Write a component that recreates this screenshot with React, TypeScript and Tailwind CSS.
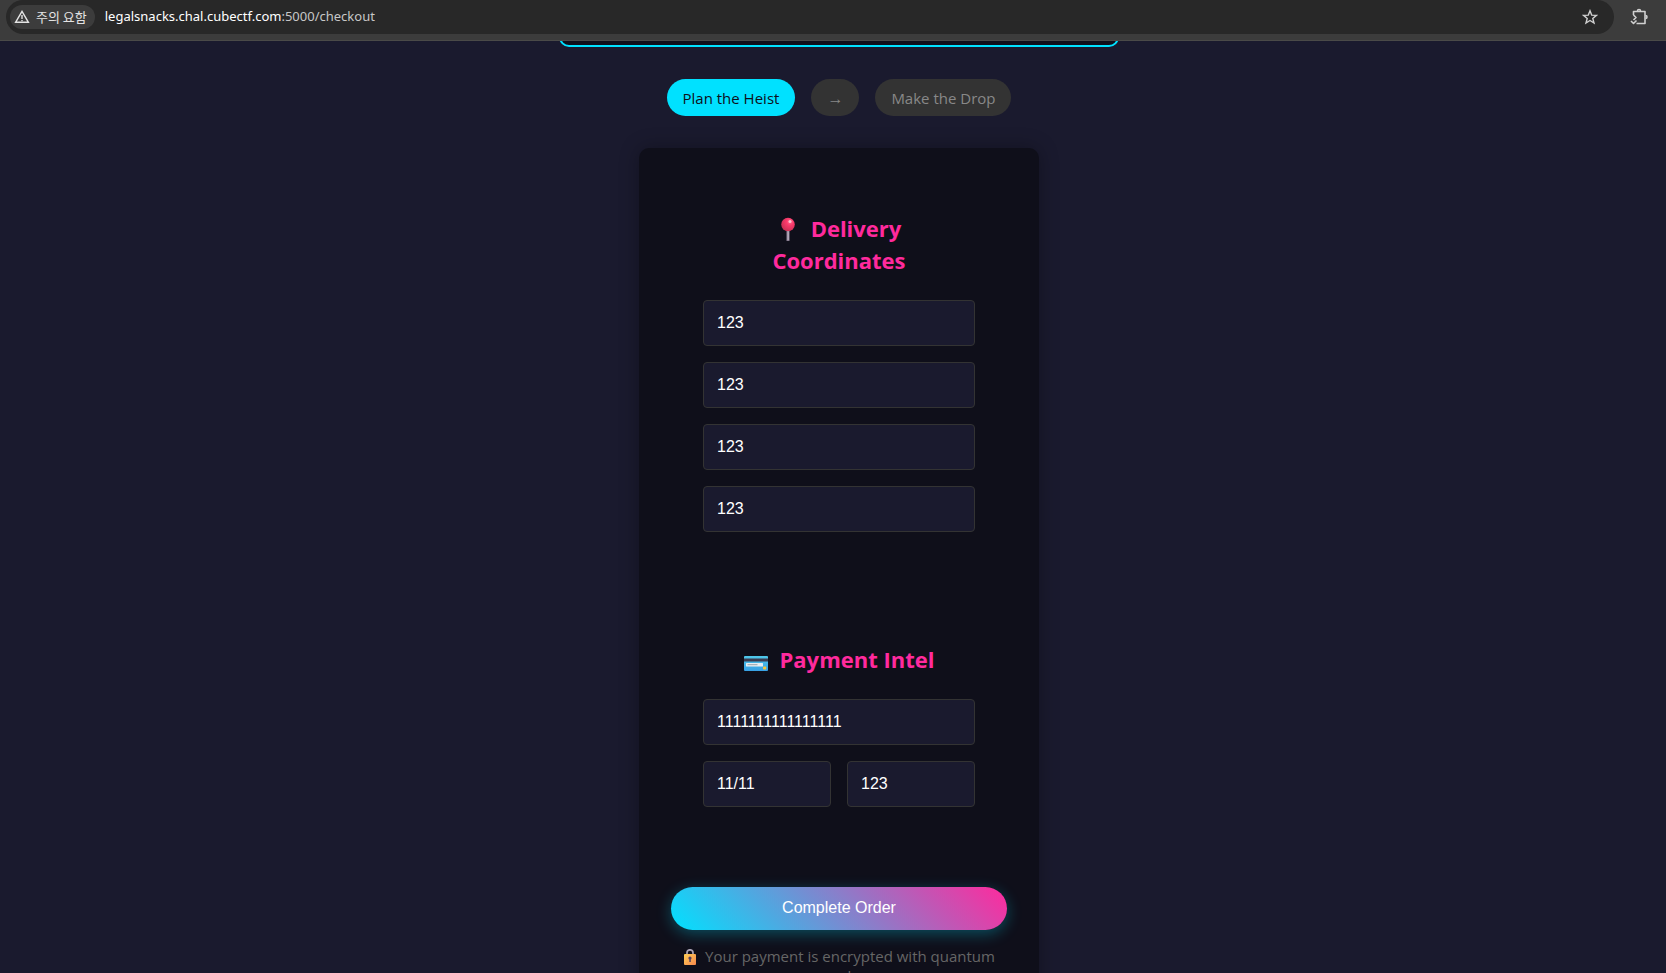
import React, { useState } from 'react';

const inputClass =
  "w-full min-w-0 h-[46px] px-[13px] bg-[#1a1a2e] border border-[#333] rounded text-base text-white outline-none focus:border-[#00e1ff] font-['Liberation_Sans',Arial,sans-serif]";

const headingClass = 'mb-6 text-center text-[22px] leading-8 font-bold text-[#ff2a9d]';

const PinIcon = () => (
  <svg viewBox="0 0 24 24" className="inline-block w-6 h-6 mr-2.5 align-[-4px]" aria-hidden="true">
    <defs>
      <radialGradient id="pin" cx="0.65" cy="0.3" r="0.75">
        <stop offset="0" stopColor="#ff6d8c" />
        <stop offset="0.35" stopColor="#fa3a6c" />
        <stop offset="1" stopColor="#c62f52" />
      </radialGradient>
    </defs>
    <rect x="9.5" y="12" width="3" height="12" rx="0.5" fill="#8b7f92" />
    <rect x="10.6" y="13" width="1" height="10" fill="#c9bfd0" />
    <circle cx="11" cy="7.5" r="6.8" fill="url(#pin)" />
    <circle cx="13" cy="4.5" r="1.5" fill="#ffc4d2" />
  </svg>
);

const CardIcon = () => (
  <svg viewBox="0 0 24 24" className="inline-block w-6 h-6 mr-3 align-[-7px]" aria-hidden="true">
    <defs>
      <linearGradient id="card" x1="0" y1="0" x2="0" y2="1">
        <stop offset="0" stopColor="#4fc8ea" />
        <stop offset="1" stopColor="#38a0e4" />
      </linearGradient>
    </defs>
    <rect x="0" y="5" width="24" height="15" rx="1" fill="url(#card)" />
    <rect x="0" y="7.5" width="24" height="3" fill="#3b3b4f" />
    <rect x="2" y="12" width="17" height="3.5" rx="0.5" fill="#e6edf2" />
    <rect x="3.5" y="13" width="10" height="1.2" fill="#aab0b6" />
    <rect x="19" y="15.5" width="3.2" height="3" rx="0.8" fill="#f8c63a" />
  </svg>
);

const LockIcon = () => (
  <svg viewBox="0 0 14 16" className="inline-block w-3.5 h-4 mr-2 align-[-3px]" aria-hidden="true">
    <defs>
      <linearGradient id="lock" x1="0" y1="0" x2="1" y2="1">
        <stop offset="0" stopColor="#ffcf55" />
        <stop offset="1" stopColor="#f7874d" />
      </linearGradient>
    </defs>
    <path d="M4 6V3.8a3 3 0 0 1 6 0V6" fill="none" stroke="#a9a2b4" strokeWidth="1.7" />
    <rect x="1" y="5" width="12" height="11" rx="1" fill="url(#lock)" />
    <circle cx="7" cy="9" r="1.6" fill="#54405f" />
    <rect x="6.3" y="9" width="1.5" height="4" fill="#54405f" />
  </svg>
);

const BrowserBar = () => (
  <div className="flex items-start h-[41px] shrink-0 bg-[#3c3c3c] border-b border-[#4a4a48] pl-1.5 pr-4">
    <div className="flex flex-1 items-center h-[34px] bg-[#282828] rounded-full pl-1 pr-4">
      <button className="flex items-center gap-1.5 h-6 pl-1 pr-2 rounded-full bg-[#3c3c3c] text-[13px] text-[#e3e3e3] font-['Noto_Sans_CJK_KR',sans-serif]">
        <svg viewBox="0 0 16 16" className="w-4 h-4" fill="none" stroke="#e3e3e3" strokeWidth="1.4" aria-hidden="true">
          <path d="M8 2.4 14.4 13.3H1.6Z" />
          <path d="M8 6v4M8 11v1.3" />
        </svg>
        주의 요함
      </button>
      <p className="flex-1 pl-2.5 text-[13px] text-[#c7c7c7] font-['Noto_Sans','Open_Sans',sans-serif]">
        <span className="text-white">legalsnacks.chal.cubectf.com</span>:5000/checkout
      </p>
      <button aria-label="Bookmark this page">
        <svg viewBox="0 0 16 16" className="w-4 h-4" fill="none" stroke="#d0d0d0" strokeWidth="1.4" aria-hidden="true">
          <path d="m8 1.8 1.7 4.3 4.7.3-3.6 3 1.2 4.6-4-2.5-4 2.5 1.2-4.6-3.6-3 4.7-.3Z" />
        </svg>
      </button>
    </div>
    <button aria-label="Extensions" className="ml-4 mr-0.5 mt-2">
      <svg viewBox="0 0 18 18" className="w-[18px] h-[18px]" fill="none" stroke="#d0d0d0" strokeWidth="1.6" strokeLinejoin="round" aria-hidden="true">
        <path d="M3.5 7V3.5H15v12H6.5M3.5 7 6 9.5 3.500 12M1 13l2.500 2.500 3-3" />
        <path d="M7.5 3a1.5 1.5 0 0 1 3 0M15.5 7.500a1.5 1.5 0 0 1 0 3" />
      </svg>
    </button>
  </div>
);

const App = () => {
  const [address, setAddress] = useState(['123', '123', '123', '123']);
  const [card, setCard] = useState('1111111111111111');
  const [expiry, setExpiry] = useState('11/11');
  const [cvv, setCvv] = useState('123');
  const labels = ['Name', 'Street', 'City', 'Zip'];

  return (
    <div className="flex flex-col h-screen overflow-hidden bg-[#1a1a2e] font-['Open_Sans','Noto_Sans',sans-serif]">
      <BrowserBar />
      <main className="flex flex-col flex-1 min-h-0 items-center pl-3 overflow-hidden">
        {/* End of the order summary */}
        <div className="w-full max-w-[560px] h-1.5 shrink-0 flex flex-col justify-end">
          <div className="h-6 shrink-0 bg-[#0f0f1a] border-2 border-[#00e1ff] rounded-[10px]" />
        </div>

        {/* Steps */}
        <div className="flex gap-4 my-8 shrink-0 text-[15px] leading-[21px]">
          <div className="px-4 pt-[9px] pb-[7px] rounded-[20px] bg-[#00e1ff] text-[#0f0f1a]">Plan the Heist</div>
          <div className="px-4 pt-[9px] pb-[7px] rounded-[20px] bg-[#333] text-[#888] text-base leading-[21px] font-['Liberation_Sans',sans-serif]">→</div>
          <div className="px-4 pt-[9px] pb-[7px] rounded-[20px] bg-[#333] text-[#888]">Make the Drop</div>
        </div>

        <form
          onSubmit={(e) => e.preventDefault()}
          className="w-full max-w-[400px] p-8 shrink-0 bg-[#0f0f1a] rounded-[10px] shadow-[0_0_20px_rgba(0,0,0,0.3)]"
        >
          <section className="p-8 mb-[47px]">
            <h2 className={`px-12 ${headingClass}`}>
              <PinIcon />Delivery Coordinates
            </h2>
            <div className="flex flex-col gap-4">
              {address.map((value, i) => (
                <input
                  key={i}
                  aria-label={labels[i]}
                  value={value}
                  onChange={(e) => setAddress(address.map((a, j) => (i === j ? e.target.value : a)))}
                  className={inputClass}
                />
              ))}
            </div>
          </section>

          <section className="p-8 mb-12">
            <h2 className={headingClass}>
              <CardIcon />Payment Intel
            </h2>
            <div className="grid grid-cols-2 gap-4">
              <div className="col-span-2">
                <input aria-label="Card number" value={card} onChange={(e) => setCard(e.target.value)} className={inputClass} />
              </div>
              <input aria-label="Expiry" value={expiry} onChange={(e) => setExpiry(e.target.value)} className={inputClass} />
              <input aria-label="CVV" value={cvv} onChange={(e) => setCvv(e.target.value)} className={inputClass} />
            </div>
          </section>

          <button
            type="submit"
            className="w-full h-[43px] pb-0.5 rounded-full text-base text-white bg-[linear-gradient(45deg,#00e1ff,#ff2a9d)] shadow-[0_4px_15px_rgba(0,225,255,0.3)] font-['Liberation_Sans',Arial,sans-serif]"
          >
            Complete Order
          </button>
          <p className="mt-4 text-center text-[15px] leading-5 text-[#666]">
            <LockIcon />Your payment is encrypted with quantum snacks
          </p>
        </form>
      </main>
    </div>
  );
};

export default App;
